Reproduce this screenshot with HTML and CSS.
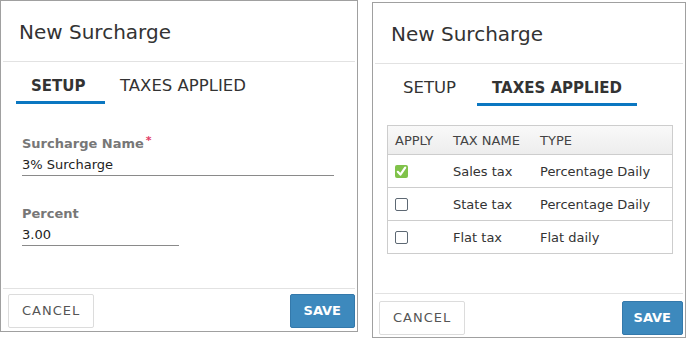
FILE: index.html
```html
<!DOCTYPE html>
<html lang="en">
<head>
<meta charset="utf-8">
<title>New Surcharge</title>
<link rel="stylesheet" href="styles.css">
</head>
<body>
<div class="stage">
  <section class="modal modal--setup">
    <header class="modal-head"><h1 class="modal-title">New Surcharge</h1></header>
    <nav class="tabs">
      <span class="tab tab--first tab--active">SETUP</span>
      <span class="tab">TAXES APPLIED</span>
    </nav>
    <div class="modal-body form">
      <div class="field field--name">
        <label class="field-label">Surcharge Name<span class="req">*</span></label>
        <div class="field-value">3% Surcharge</div>
      </div>
      <div class="field field--percent">
        <label class="field-label">Percent</label>
        <div class="field-value">3.00</div>
      </div>
    </div>
    <footer class="modal-foot modal-foot--setup">
      <button class="btn btn--cancel">CANCEL</button>
      <button class="btn btn--save">SAVE</button>
    </footer>
  </section>

  <section class="modal modal--taxes">
    <header class="modal-head"><h1 class="modal-title">New Surcharge</h1></header>
    <nav class="tabs">
      <span class="tab tab--first">SETUP</span>
      <span class="tab tab--active">TAXES APPLIED</span>
    </nav>
    <div class="modal-body">
      <table class="tax-table">
        <colgroup><col class="col-apply"><col class="col-name"><col></colgroup>
        <thead>
          <tr><th>APPLY</th><th>TAX NAME</th><th>TYPE</th></tr>
        </thead>
        <tbody>
          <tr>
            <td><svg class="check" width="13" height="13" viewBox="0 0 13 13"><rect x="0" y="0" width="13" height="13" rx="2" fill="#80c24a"/><path d="M2.8 6.8 L5.4 9.6 L10.2 2.6" fill="none" stroke="#fff" stroke-width="2.2" stroke-linecap="round" stroke-linejoin="round"/></svg></td>
            <td>Sales tax</td><td>Percentage Daily</td>
          </tr>
          <tr>
            <td><span class="box"></span></td>
            <td>State tax</td><td>Percentage Daily</td>
          </tr>
          <tr>
            <td><span class="box"></span></td>
            <td>Flat tax</td><td>Flat daily</td>
          </tr>
        </tbody>
      </table>
    </div>
    <footer class="modal-foot modal-foot--taxes">
      <button class="btn btn--cancel">CANCEL</button>
      <button class="btn btn--save">SAVE</button>
    </footer>
  </section>
</div>
</body>
</html>
```
FILE: styles.css
```css
body {
  margin: 0;
  background: #fff;
  font-family: "DejaVu Sans", "Liberation Sans", sans-serif;
  color: #333;
}
.stage {
  display: flex;
  align-items: flex-start;
}
.modal {
  box-sizing: border-box;
  border: 1px solid #a0a0a0;
  display: flex;
  flex-direction: column;
  background: #fff;
}
.modal--setup {
  width: 358px;
  height: 332px;
}
.modal--taxes {
  width: 314px;
  height: 336px;
  margin: 2px 0 0 14px;
}
.modal-head {
  box-sizing: border-box;
  height: 61px;
  margin: 0 2px;
  padding: 19px 0 0 16px;
  border-bottom: 1px solid #e2e2e2;
}
.modal-title {
  margin: 0;
  font-size: 20px;
  font-weight: normal;
  line-height: 24px;
  color: #333;
}
.tabs {
  display: flex;
  align-items: baseline;
  padding: 14px 0 0 15px;
}
.tab {
  box-sizing: border-box;
  padding: 0 15px 5px;
  border-bottom: 3px solid transparent;
  font-size: 16.5px;
  line-height: 20px;
  color: #333;
}
.tab--first {
  min-width: 89px;
}
.tab--active {
  font-size: 15px;
  font-weight: bold;
  border-bottom-color: #0b77c1;
}
.modal-body {
  flex: 1;
}
.form {
  padding: 29px 0 0 21px;
}
.field + .field {
  margin-top: 30px;
}
.field--name {
  width: 312px;
}
.field--percent {
  width: 157px;
}
.field-label {
  display: block;
  font-size: 13px;
  font-weight: bold;
  line-height: 16px;
  color: #777;
}
.req {
  color: #e23d66;
  font-size: 11px;
  margin-left: 2px;
  vertical-align: 4px;
}
.field-value {
  margin-top: 5px;
  padding-bottom: 2px;
  border-bottom: 1px solid #8a8a8a;
  font-size: 13px;
  line-height: 16px;
  color: #222;
}
.tax-table {
  margin: 19px 0 0 14px;
  width: 286px;
  table-layout: fixed;
  border-collapse: separate;
  border-spacing: 0;
  border: 1px solid #cdcdcd;
  font-size: 13px;
}
.col-apply { width: 58px; }
.col-name { width: 87px; }
.tax-table th {
  height: 28px;
  padding: 0 0 0 7px;
  text-align: left;
  font-weight: normal;
  color: #444;
  background: linear-gradient(to bottom, #f9f9f9, #ededed);
}
.tax-table td {
  height: 32px;
  padding: 0 0 0 7px;
  border-top: 1px solid #cdcdcd;
  color: #333;
  white-space: nowrap;
}
.check {
  display: block;
}
.box {
  display: block;
  box-sizing: border-box;
  width: 13px;
  height: 13px;
  border: 1px solid #5d6873;
  border-radius: 2px;
  background: #fff;
}
.modal-foot {
  display: flex;
  justify-content: space-between;
  align-items: flex-start;
  margin: 0 2px;
  border-top: 1px solid #e2e2e2;
}
.modal-foot--setup {
  padding: 5px 0 3px 5px;
}
.modal-foot--taxes {
  padding: 7px 0 2px 4px;
}
.btn {
  box-sizing: border-box;
  height: 34px;
  border-radius: 2px;
  font-family: "DejaVu Sans", "Liberation Sans", sans-serif;
  font-size: 13px;
  line-height: 16px;
  cursor: pointer;
}
.btn--cancel {
  padding: 0 13px 0 13px;
  border: 1px solid #dcdcdc;
  background: #fff;
  color: #555;
  letter-spacing: 1px;
}
.btn--save {
  padding: 0 13px;
  border: 1px solid #3479ab;
  background: #3d89bd;
  color: #fff;
  font-weight: bold;
}
.modal-foot--taxes .btn--save {
  padding: 0 11px;
}
```
